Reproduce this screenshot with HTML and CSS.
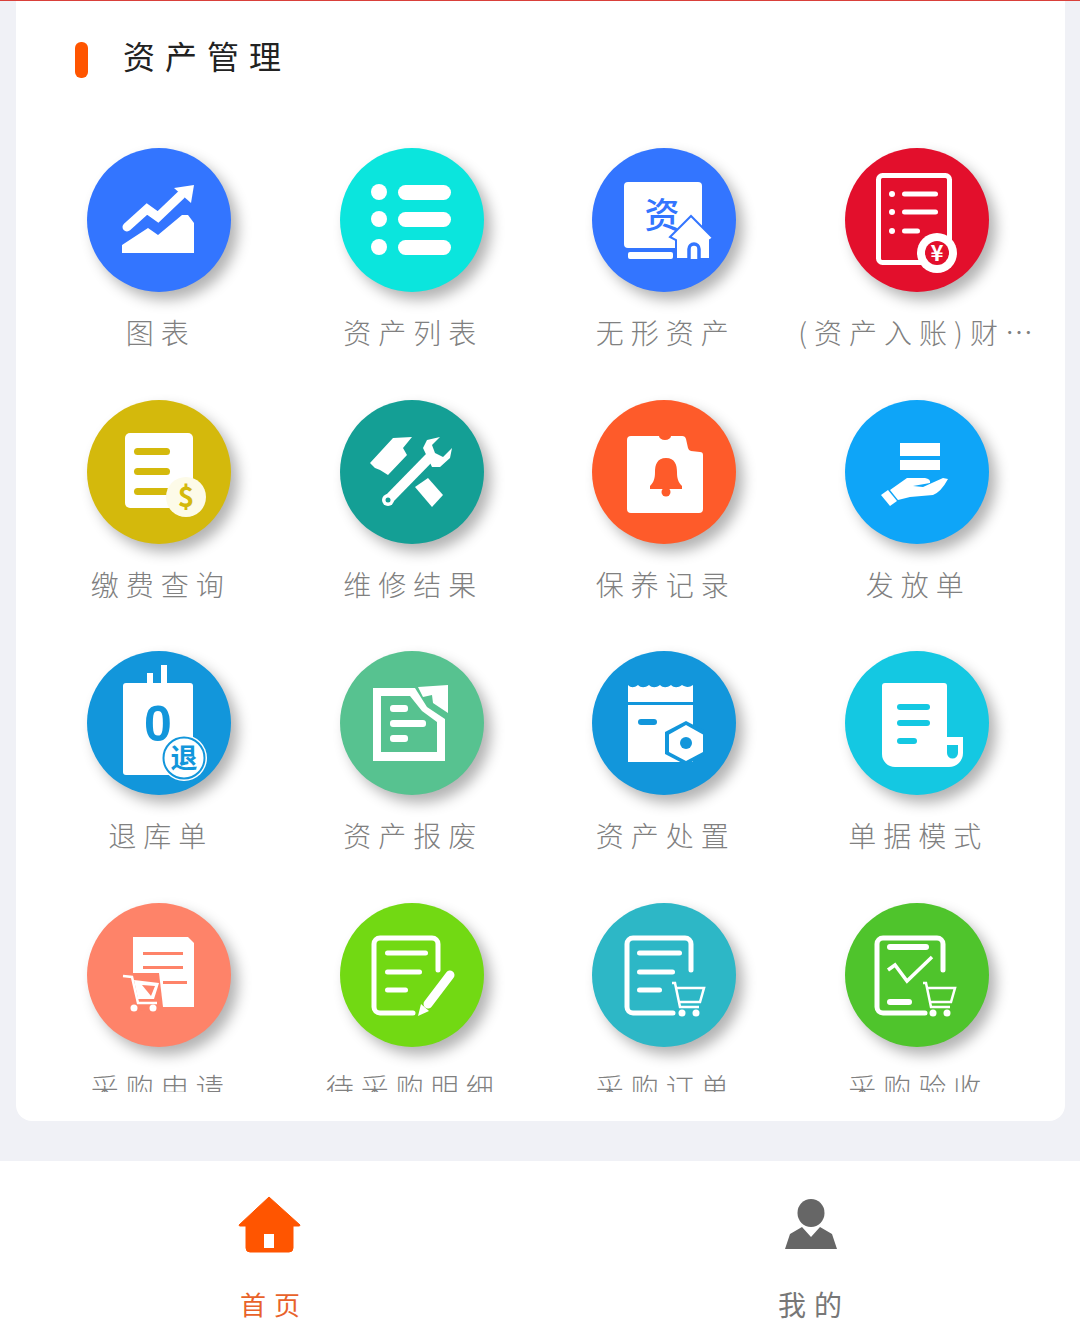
FILE: index.html
```html
<!DOCTYPE html>
<html lang="zh-CN">
<head>
  <meta charset="UTF-8">
  <title>资产管理</title>
  <link rel="stylesheet" href="styles.css">
</head>
<body>

  <div class="topline"></div>

  <section class="card">
    <div class="card-title">
      <span class="title-mark"></span>
      <h2>资产管理</h2>
    </div>

    <div class="grid">

      <div class="cell">
        <div class="circle c-blue">
          <svg viewBox="0 0 144 144">
            <polyline points="40,79 60,61 71,69 94,47" fill="none" stroke="#fff" stroke-width="9" stroke-linecap="round"/>
            <polygon points="107,37 87,40 104,55" fill="#fff"/>
            <path d="M35 105V97L61 80 71 87 95 67H101L107 75V105Z" fill="#fff"/>
          </svg>
        </div>
        <div class="label">图表</div>
      </div>

      <div class="cell">
        <div class="circle c-aqua">
          <svg viewBox="0 0 144 144">
            <circle cx="39" cy="44" r="8" fill="#fff"/>
            <circle cx="39" cy="71" r="8" fill="#fff"/>
            <circle cx="39" cy="99" r="8" fill="#fff"/>
            <rect x="58" y="37" width="53" height="15" rx="7.500" fill="#fff"/>
            <rect x="58" y="64" width="53" height="15" rx="7.500" fill="#fff"/>
            <rect x="58" y="92" width="53" height="15" rx="7.500" fill="#fff"/>
          </svg>
        </div>
        <div class="label">资产列表</div>
      </div>

      <div class="cell">
        <div class="circle c-blue">
          <svg viewBox="0 0 144 144">
            <rect x="32" y="34" width="78" height="66" rx="4" fill="#fff"/>
            <rect x="36" y="104" width="45" height="7" rx="2" fill="#fff"/>
            <text class="glyph" x="70" y="80" font-size="35" text-anchor="middle">资</text>
            <path d="M78 89L99 68 121 90 118 92V111H84V92Z" fill="#fff" stroke="currentColor" stroke-width="2"/>
            <path d="M97 111V101a5 5 0 0 1 10 0V111" fill="#fff" stroke="currentColor" stroke-width="3.500"/>
          </svg>
        </div>
        <div class="label">无形资产</div>
      </div>

      <div class="cell">
        <div class="circle c-red">
          <svg viewBox="0 0 144 144">
            <rect x="33.500" y="27.500" width="71" height="87" rx="4" fill="none" stroke="#fff" stroke-width="5"/>
            <circle cx="47" cy="46" r="3" fill="#fff"/>
            <circle cx="47" cy="64" r="3" fill="#fff"/>
            <circle cx="47" cy="83" r="3" fill="#fff"/>
            <rect x="57" y="43.500" width="36" height="5" rx="2.500" fill="#fff"/>
            <rect x="57" y="61.500" width="36" height="5" rx="2.500" fill="#fff"/>
            <rect x="57" y="80.500" width="18" height="5" rx="2.500" fill="#fff"/>
            <circle cx="92" cy="105" r="20" fill="#fff"/>
            <circle cx="92" cy="105" r="12" fill="currentColor"/>
            <text class="glyph glyph-white" x="92" y="113" font-size="22" text-anchor="middle">¥</text>
          </svg>
        </div>
        <div class="label">(资产入账)财务入账单</div>
      </div>

      <div class="cell">
        <div class="circle c-mustard">
          <svg viewBox="0 0 144 144">
            <rect x="38" y="33" width="68" height="75" rx="5" fill="#fff"/>
            <rect x="47" y="48" width="36" height="7" rx="3.500" fill="currentColor"/>
            <rect x="47" y="68" width="36" height="7" rx="3.500" fill="currentColor"/>
            <rect x="47" y="88" width="36" height="7" rx="3.500" fill="currentColor"/>
            <circle cx="99" cy="97" r="20" fill="#fdfbe8"/>
            <text class="glyph glyph-bold" x="99" y="107" font-size="28" text-anchor="middle">$</text>
          </svg>
        </div>
        <div class="label">缴费查询</div>
      </div>

      <div class="cell">
        <div class="circle c-teal">
          <svg viewBox="0 0 144 144">
            <path d="M30 63L53 38 72 37 63 48 67 55 48 75 40 70 35 68Z" fill="#fff"/>
            <polygon points="88,78 103,95 92,107 75,87" fill="#fff"/>
            <line x1="48" y1="100" x2="92" y2="55" stroke="#fff" stroke-width="10"/>
            <path d="M83 48L87 40 100 37 92 45 95 53 103 57 112 48 110 58 100 67H92Z" fill="#fff"/>
            <circle cx="48" cy="100" r="6" fill="#fff"/>
            <circle cx="48" cy="100" r="2.500" fill="currentColor"/>
          </svg>
        </div>
        <div class="label">维修结果</div>
      </div>

      <div class="cell">
        <div class="circle c-orange">
          <svg viewBox="0 0 144 144">
            <path d="M39 36H67a6 4 0 0 0 12 0H90a4 4 0 0 1 4 3L96 48a4 4 0 0 0 3 3L108 52a3 3 0 0 1 3 3V109a4 4 0 0 1-4 4H39a4 4 0 0 1-4-4V40a4 4 0 0 1 4-4Z" fill="#fff"/>
            <path d="M74 58c-9 0-11 7-11 14 0 6-1 10-5 14v3H90V86c-4-4-5-8-5-14 0-7-2-14-11-14Z" fill="currentColor"/>
            <circle cx="74" cy="92" r="4.500" fill="currentColor"/>
          </svg>
        </div>
        <div class="label">保养记录</div>
      </div>

      <div class="cell">
        <div class="circle c-sky">
          <svg viewBox="0 0 144 144">
            <rect x="55" y="43" width="40" height="13" fill="#fff"/>
            <rect x="55" y="60" width="40" height="10" fill="#fff"/>
            <polygon points="36,95 43,90 52,101 45,106" fill="#fff"/>
            <path d="M45 90L62 78H80Q86 79 85 83L68 86 78 87 98 78 103 79Q96 92 88 95L65 97 53 100Z" fill="#fff"/>
          </svg>
        </div>
        <div class="label">发放单</div>
      </div>

      <div class="cell">
        <div class="circle c-ocean">
          <svg viewBox="0 0 144 144">
            <rect x="60" y="22" width="6" height="14" fill="#fff"/>
            <rect x="74" y="14" width="6" height="22" fill="#fff"/>
            <rect x="36" y="32" width="70" height="92" rx="3" fill="#fff"/>
            <text class="glyph glyph-zero" x="71" y="90" font-size="50" text-anchor="middle">0</text>
            <circle cx="97" cy="107" r="23" fill="#fff"/>
            <circle cx="97" cy="107" r="20.500" fill="none" stroke="currentColor" stroke-width="2"/>
            <text class="glyph glyph-bold" x="97" y="117" font-size="27" text-anchor="middle">退</text>
          </svg>
        </div>
        <div class="label">退库单</div>
      </div>

      <div class="cell">
        <div class="circle c-green">
          <svg viewBox="0 0 144 144">
            <path d="M33 37H75L87 56 105 68V110H33Z" fill="#fff"/>
            <path d="M41 45H70L82 60 97 71V101H41Z" fill="currentColor"/>
            <polygon points="78,36 108,34 108,62 93,52 92,44 83,46" fill="#fff"/>
            <rect x="50" y="54" width="18" height="7" rx="3" fill="#fff"/>
            <rect x="50" y="69" width="36" height="7" rx="3" fill="#fff"/>
            <rect x="50" y="84" width="18" height="7" rx="3" fill="#fff"/>
          </svg>
        </div>
        <div class="label">资产报废</div>
      </div>

      <div class="cell">
        <div class="circle c-ocean">
          <svg viewBox="0 0 144 144">
            <path d="M36 34c3 3 6 3 10 0 3 3 7 3 11 0 3 3 7 3 11 0 3 3 7 3 11 0 3 3 7 3 11 0 3 2 7 3 11 0V51H36Z" fill="#fff"/>
            <path d="M36 54H101V111H36Z" fill="#fff"/>
            <rect x="46" y="68" width="19" height="6" rx="3" fill="currentColor"/>
            <polygon points="94,70 115,81 115,103 94,114 73,103 73,81" fill="currentColor"/>
            <polygon points="94,74 111,83.500 111,101 94,110 77,101 77,83.500" fill="#fff"/>
            <circle cx="94" cy="92" r="6" fill="currentColor"/>
          </svg>
        </div>
        <div class="label">资产处置</div>
      </div>

      <div class="cell">
        <div class="circle c-cyan">
          <svg viewBox="0 0 144 144">
            <path d="M40 32H99a3 3 0 0 1 3 3V86H118V102a14 14 0 0 1-14 14H50a13 13 0 0 1-13-13V35a3 3 0 0 1 3-3Z" fill="#fff"/>
            <path d="M102 94H113V102a5.500 5.500 0 0 1-11 0Z" fill="currentColor"/>
            <rect x="52" y="53" width="33" height="6" rx="3" fill="currentColor"/>
            <rect x="52" y="69" width="33" height="6" rx="3" fill="currentColor"/>
            <rect x="52" y="87" width="20" height="6" rx="3" fill="currentColor"/>
          </svg>
        </div>
        <div class="label">单据模式</div>
      </div>

      <div class="cell">
        <div class="circle c-salmon">
          <svg viewBox="0 0 144 144">
            <path d="M46 34H101L107 40V104H46Z" fill="#fff"/>
            <rect x="56" y="49" width="40" height="3" fill="currentColor"/>
            <rect x="56" y="63" width="40" height="3" fill="currentColor"/>
            <rect x="76" y="78" width="24" height="3" fill="currentColor"/>
            <polygon points="40,70 72,70 76,104 40,110" fill="currentColor"/>
            <polyline points="36,73 45,74 51,100 70,100" fill="none" stroke="#fff" stroke-width="2.500"/>
            <polygon points="47,77 72,80 67,96 51,96" fill="#fff"/>
            <polygon points="55,82 68,83 64,93" fill="currentColor"/>
            <circle cx="47" cy="105" r="3.500" fill="#fff"/>
            <circle cx="66" cy="105" r="3.500" fill="#fff"/>
          </svg>
        </div>
        <div class="label">采购申请</div>
      </div>

      <div class="cell">
        <div class="circle c-lime">
          <svg viewBox="0 0 144 144">
            <path d="M73 110H40a6 6 0 0 1-6-6V41a6 6 0 0 1 6-6H92a6 6 0 0 1 6 6V67" fill="none" stroke="#fff" stroke-width="5" stroke-linecap="round"/>
            <rect x="45" y="47.500" width="43" height="5" rx="2.500" fill="#fff"/>
            <rect x="45" y="66.500" width="37" height="5" rx="2.500" fill="#fff"/>
            <rect x="45" y="84.500" width="23" height="5" rx="2.500" fill="#fff"/>
            <line x1="110" y1="72" x2="88" y2="101" stroke="#fff" stroke-width="9" stroke-linecap="round"/>
            <polygon points="81,101 89,108 78,113" fill="#fff"/>
          </svg>
        </div>
        <div class="label">待采购明细</div>
      </div>

      <div class="cell">
        <div class="circle c-lagoon">
          <svg viewBox="0 0 144 144">
            <path d="M81 110H41a6 6 0 0 1-6-6V41a6 6 0 0 1 6-6H93a6 6 0 0 1 6 6V67" fill="none" stroke="#fff" stroke-width="5" stroke-linecap="round"/>
            <rect x="45" y="47.500" width="45" height="5" rx="2.500" fill="#fff"/>
            <rect x="45" y="66.500" width="38" height="5" rx="2.500" fill="#fff"/>
            <rect x="45" y="84.500" width="25" height="5" rx="2.500" fill="#fff"/>
            <path d="M80 80H83L88 104H107M85 85H112L108 99H88" fill="none" stroke="#fff" stroke-width="2.500"/>
            <circle cx="90" cy="110" r="3.500" fill="#fff"/>
            <circle cx="104" cy="110" r="3.500" fill="#fff"/>
          </svg>
        </div>
        <div class="label">采购订单</div>
      </div>

      <div class="cell">
        <div class="circle c-grass">
          <svg viewBox="0 0 144 144">
            <path d="M80 110H38a6 6 0 0 1-6-6V41a6 6 0 0 1 6-6H92a6 6 0 0 1 6 6V67" fill="none" stroke="#fff" stroke-width="5" stroke-linecap="round"/>
            <rect x="42" y="41" width="42" height="6" rx="3" fill="#fff"/>
            <polyline points="43,67 50,62 62,78 87,54" fill="none" stroke="#fff" stroke-width="3.500"/>
            <rect x="42" y="96" width="25" height="6" rx="3" fill="#fff"/>
            <path d="M78 80H81L86 104H105M83 85H110L106 99H86" fill="none" stroke="#fff" stroke-width="2.500"/>
            <circle cx="88" cy="110" r="3.500" fill="#fff"/>
            <circle cx="102" cy="110" r="3.500" fill="#fff"/>
          </svg>
        </div>
        <div class="label">采购验收</div>
      </div>

    </div>
  </section>

  <nav class="tabbar">
    <div class="tab tab-active">
      <svg class="tab-icon" viewBox="0 0 64 60">
        <path d="M31 1L62 29a1 1 0 0 1-1 1H55V52a4 4 0 0 1-4 4H12a4 4 0 0 1-4-4V30H2a1 1 0 0 1-1-1Z" fill="#ff5500" stroke="#ff5500" stroke-linejoin="round" stroke-width="1"/>
        <rect x="26" y="38" width="10" height="14" fill="#fff"/>
      </svg>
      <span>首页</span>
    </div>
    <div class="tab">
      <svg class="tab-icon tab-icon-me" viewBox="0 0 64 60">
        <ellipse cx="32" cy="17" rx="13.500" ry="14" fill="#666"/>
        <path d="M6 53L11 38 23 31 32 41 41 31 53 38 58 53Z" fill="#666"/>
        <polygon points="28,31 36,31 32,38" fill="#fff"/>
      </svg>
      <span>我的</span>
    </div>
  </nav>

</body>
</html>
```

FILE: styles.css
```css
body {
  margin: 0;
  background: #f0f1f6;
  font-family: "Noto Sans CJK SC", "Noto Sans", sans-serif;
}
.topline {
  height: 1px;
  background: #d9403a;
}
.card {
  margin: 0 15px 0 16px;
  height: 1120px;
  background: #fff;
  border-radius: 0 0 16px 16px;
}
.card-title {
  display: flex;
  align-items: center;
  height: 112px;
  padding-left: 59px;
}
.title-mark {
  width: 13px;
  height: 36px;
  border-radius: 6px;
  background: #ff5500;
  margin: 6px 35px 0 0;
}
.card-title h2 {
  margin: -4px 0 0;
  font-size: 32px;
  font-weight: 400;
  letter-spacing: 10px;
  color: #222;
}
.grid {
  display: grid;
  grid-template-columns: repeat(4, 1fr);
  grid-auto-rows: 251.7px;
  width: 1010px;
  height: 979px;
  margin-left: 17px;
  padding-top: 35px;
  box-sizing: border-box;
  overflow: hidden;
}
.cell {
  display: flex;
  flex-direction: column;
  align-items: center;
}
.circle {
  width: 144px;
  height: 144px;
  flex: none;
  border-radius: 50%;
  box-shadow: 7px 8px 14px rgba(0,0,0,0.3);
}
.circle svg {
  display: block;
  width: 144px;
  height: 144px;
}
.label {
  width: 240px;
  margin-top: 20px;
  padding-left: 3px;
  font-size: 28px;
  font-weight: 300;
  line-height: 40px;
  letter-spacing: 7px;
  color: #808080;
  text-align: center;
  white-space: nowrap;
  overflow: hidden;
  text-overflow: ellipsis;
}
.glyph {
  fill: currentColor;
  font-family: "Noto Sans CJK SC", sans-serif;
  font-weight: 500;
}
.glyph-bold {
  font-weight: 700;
}
.glyph-white {
  fill: #fff;
  font-weight: 700;
}
.glyph-zero {
  font-family: "Liberation Sans", sans-serif;
  font-weight: 700;
}
.c-blue { background: #3375ff; color: #3375ff; }
.c-aqua { background: #0be5dd; color: #0be5dd; }
.c-red { background: #e30f2c; color: #e30f2c; }
.c-mustard { background: #d4b90c; color: #d4b90c; }
.c-teal { background: #149f95; color: #149f95; }
.c-orange { background: #fe5b2a; color: #fe5b2a; }
.c-sky { background: #0ea5f8; color: #0ea5f8; }
.c-ocean { background: #1296db; color: #1296db; }
.c-green { background: #57c290; color: #57c290; }
.c-cyan { background: #14c8e2; color: #14c8e2; }
.c-salmon { background: #fe8369; color: #fe8369; }
.c-lime { background: #72d913; color: #72d913; }
.c-lagoon { background: #2db7c6; color: #2db7c6; }
.c-grass { background: #4fc42c; color: #4fc42c; }
.tabbar {
  display: flex;
  height: 171px;
  margin-top: 40px;
  background: #fff;
}
.tab {
  flex: 1;
  display: flex;
  flex-direction: column;
  align-items: center;
  padding-top: 35px;
  font-size: 28px;
  line-height: 40px;
  letter-spacing: 8px;
  color: #777;
}
.tab-active {
  color: #e8622a;
  font-size: 26px;
}
.tab-icon {
  display: block;
  width: 64px;
  height: 60px;
  margin-bottom: 28px;
}
.tab-icon-me {
  margin-left: 2px;
}
.tab span {
  margin-right: -8px;
}
```
